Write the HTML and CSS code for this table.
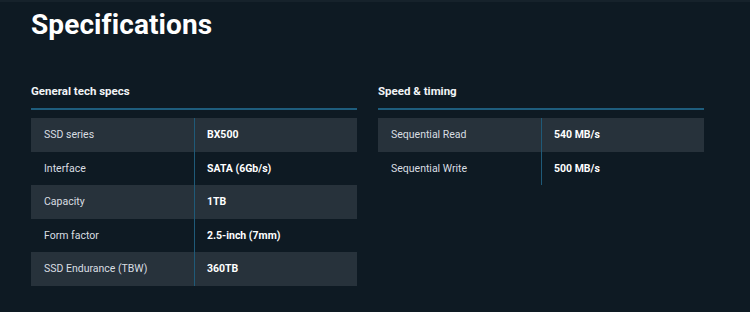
FILE: index.html
```html
<!DOCTYPE html>
<html lang="en">
<head>
<meta charset="utf-8">
<title>Specifications</title>
<link rel="stylesheet" href="styles.css">
</head>
<body>
<main class="specs">
  <h1 class="specs-title">Specifications</h1>
  <div class="specs-columns">
    <section class="spec-group">
      <h2 class="spec-group-title">General tech specs</h2>
      <div class="spec-table">
        <div class="spec-row"><span class="spec-label">SSD series</span><span class="spec-value">BX500</span></div>
        <div class="spec-row"><span class="spec-label">Interface</span><span class="spec-value">SATA (6Gb/s)</span></div>
        <div class="spec-row"><span class="spec-label">Capacity</span><span class="spec-value">1TB</span></div>
        <div class="spec-row"><span class="spec-label">Form factor</span><span class="spec-value">2.5-inch (7mm)</span></div>
        <div class="spec-row"><span class="spec-label">SSD Endurance (TBW)</span><span class="spec-value">360TB</span></div>
      </div>
    </section>
    <section class="spec-group">
      <h2 class="spec-group-title">Speed &amp; timing</h2>
      <div class="spec-table">
        <div class="spec-row"><span class="spec-label">Sequential Read</span><span class="spec-value">540 MB/s</span></div>
        <div class="spec-row"><span class="spec-label">Sequential Write</span><span class="spec-value">500 MB/s</span></div>
      </div>
    </section>
  </div>
</main>
</body>
</html>
```
FILE: styles.css
```css
html, body {
  margin: 0;
  padding: 0;
}

body {
  width: 750px;
  height: 312px;
  overflow: hidden;
  background: #0e1a23;
  border-top: 2px solid #16222b;
  box-sizing: border-box;
  color: #e9edf0;
  font-family: Roboto, "Liberation Sans", sans-serif;
}

.specs {
  padding: 0 46px 0 31px;
}

.specs-title {
  margin: 0;
  padding-top: 6px;
  font-size: 28px;
  line-height: 34px;
  font-weight: 700;
  color: #ffffff;
  letter-spacing: 0.1px;
}

.specs-columns {
  display: grid;
  grid-template-columns: 326px 326px;
  column-gap: 21px;
  margin-top: 42px;
}

.spec-group-title {
  margin: 0;
  font-size: 11.5px;
  line-height: 14px;
  font-weight: 700;
  color: #f2f4f6;
  padding-bottom: 10px;
  border-bottom: 2px solid #1e5d7d;
}

.spec-table {
  margin-top: 8px;
  display: flex;
  flex-direction: column;
}

.spec-row {
  display: grid;
  grid-template-columns: 163px 1fr;
  height: 33.5px;
  align-items: stretch;
  font-size: 10.5px;
}

.spec-row:nth-child(odd) {
  background: #27323b;
}

.spec-label,
.spec-value {
  display: flex;
  align-items: center;
}

.spec-label {
  padding-left: 13px;
  color: #d9dee2;
}

.spec-value {
  padding-left: 12px;
  border-left: 1px solid #1f5a78;
  font-weight: 700;
  color: #ffffff;
}
```
